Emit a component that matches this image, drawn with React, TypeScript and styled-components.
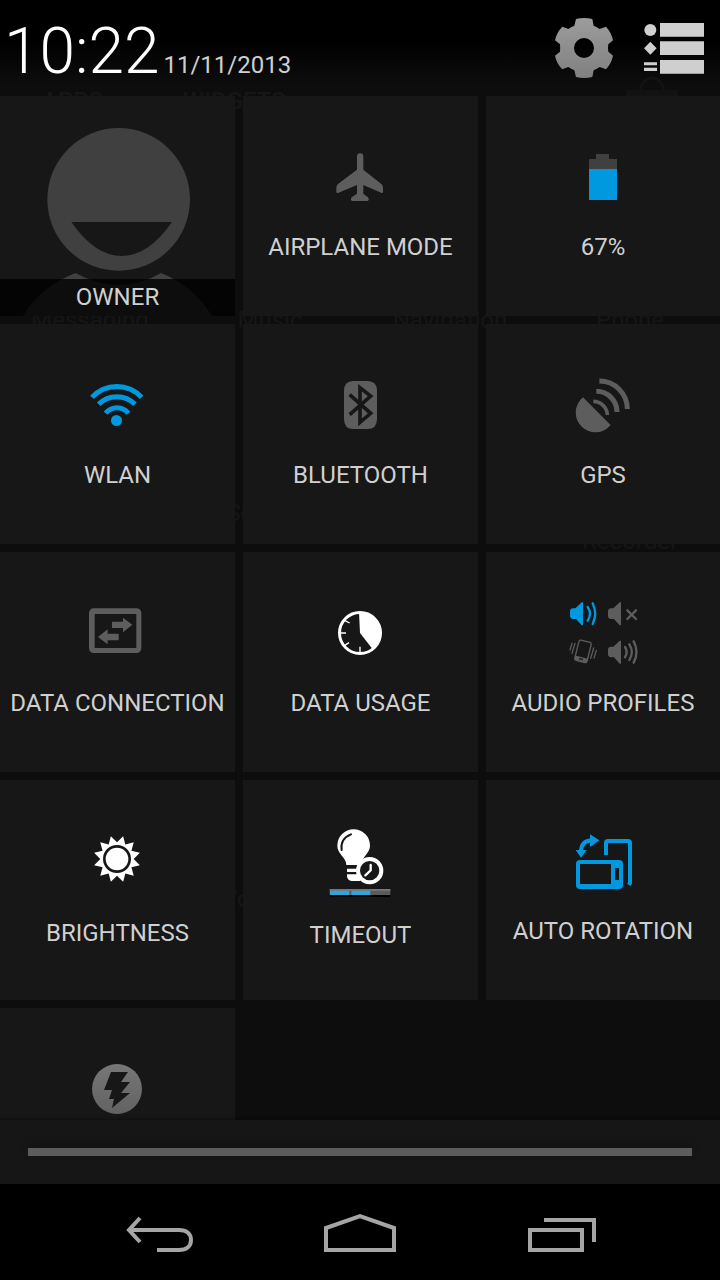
import React from "react";
import styled, { createGlobalStyle } from "styled-components";

const BLUE = "#0099e0";
const GREY = "#5d5d5d";
const TILE = "#171717";
const WHITE = "#ffffff";

const GlobalStyle = createGlobalStyle`
  * { box-sizing: border-box; }
  body { margin: 0; background: #000; font-family: Roboto, "Noto Sans", sans-serif; }
  button { border: 0; padding: 0; margin: 0; background: none; color: inherit; font: inherit; cursor: pointer; }
  svg { display: block; flex: none; }
`;

const Screen = styled.main`
  position: relative;
  display: flex;
  flex-direction: column;
  height: 100vh;
  overflow: hidden;
  background: linear-gradient(#000 0, #000 40px, #0d0d0d 84px, #0d0d0d 100%);
`;

/* Launcher page that shines faintly through the shade */
const Launcher = styled.div`
  position: absolute;
  inset: 0;
  padding-top: 88px;
  color: #161616;
  font-size: 24px;
  line-height: 18px;
`;

const LauncherTabs = styled.div`
  display: flex;
  gap: 80px;
  padding: 4px 42px 0;
  height: 48px;
  font-weight: 500;
`;

const LauncherRow = styled.div`
  display: grid;
  grid-template-columns: repeat(4, 1fr);
  height: 193px;
  padding-top: 175px;
`;

const LauncherName = styled.span`
  display: flex;
  flex-direction: column;
  align-items: center;
  gap: 10px;
`;

const StoreMark = styled.svg`
  margin-left: auto;
  overflow: visible;
`;

const Header = styled.header`
  position: relative;
  display: flex;
  align-items: center;
  justify-content: space-between;
  height: 96px;
  flex: none;
  padding: 0 16px 0 4px;
`;

const Clock = styled.div`
  display: flex;
  align-items: baseline;
  gap: 4px;
  padding-top: 8px;
`;

const Time = styled.time`
  color: #fff;
  font-size: 64px;
  font-weight: 300;
  line-height: 84px;
`;

const DateText = styled.time`
  color: #cfcfcf;
  font-size: 24px;
  line-height: 28px;
`;

const HeaderActions = styled.div`
  display: flex;
  align-items: center;
  gap: 30px;
`;

const Tiles = styled.section`
  position: relative;
  flex: 1;
  min-height: 0;
  overflow: hidden;
  display: grid;
  grid-template-columns: 235fr 235fr 234fr;
  grid-auto-rows: 220px;
  align-content: start;
  gap: 8px;
`;

const Tile = styled.button`
  display: flex;
  flex-direction: column;
  align-items: center;
  gap: 17px;
  padding-top: 40px;
  background: ${TILE};
`;

const Label = styled.span`
  color: #d0d0d0;
  font-size: 24px;
  line-height: 28px;
  white-space: nowrap;
`;

const OwnerTile = styled.button`
  display: grid;
  grid-template: 100% / 100%;
  background: ${TILE};
  overflow: hidden;
  & > * { grid-area: 1 / 1; }
`;

const OwnerBar = styled.span`
  display: flex;
  justify-content: center;
  align-self: end;
  z-index: 1;
  padding: 4px 0 5px;
  background: rgba(0, 0, 0, 0.8);
`;

const HandlePanel = styled.button`
  position: relative;
  display: flex;
  align-items: center;
  flex: none;
  height: 64px;
  padding: 0 28px;
  background: #161616;
  box-shadow: 0 -1px 4px rgba(0, 0, 0, 0.4);
`;

const HandleBar = styled.span`
  flex: 1;
  height: 8px;
  background: #5c5c5c;
  box-shadow: 0 -4px 10px rgba(0, 0, 0, 0.2);
`;

const NavBar = styled.nav`
  position: relative;
  display: flex;
  flex: none;
  height: 96px;
  padding: 0 60px;
  background: #000;
`;

const NavButton = styled.button`
  display: flex;
  flex: 1;
  align-items: center;
  justify-content: center;
`;

const Glyph = ({ x, y, h = 80, children }: { x: number; y: number; h?: number; children: React.ReactNode }) => (
  <svg width="80" height={h} viewBox={`${x} ${y} 240 ${h * 3}`} aria-hidden="true">
    {children}
  </svg>
);

const Airplane = () => (
  <Glyph x={33} y={18}>
    <path
      fill={GREY}
      d="M141 79q0-9 9.500-9t9.500 9V119L213 161q6 5 6 11V186q0 4-4 3L160 165V191L174 202q3 4 2 8l-3 3H126l-3-3q-1-4 2-8L141 191V165L84 189q-5 1-5-3V172q0-6 6-11L141 119Z"
    />
  </Glyph>
);

const Battery = () => (
  <Glyph x={759} y={18}>
    <path fill="#404040" d="M858 72h39v15h24v30h-84V87h21z" />
    <path fill={BLUE} d="M837 117h84v93h-84z" />
  </Glyph>
);

const Wifi = () => (
  <Glyph x={54} y={12}>
    <circle cx="169.500" cy="181.500" r="16.500" fill={BLUE} />
    <g fill="none" stroke={BLUE} strokeWidth="15">
      <path d="M96 112A101 101 0 0 1 245 112" />
      <path d="M116 133A76 76 0 0 1 225 133" />
      <path d="M137 160A43 43 0 0 1 205 160" />
    </g>
  </Glyph>
);

const Bluetooth = () => (
  <Glyph x={783} y={12}>
    <path fill={GREY} d="M880 63h43q28 0 28 30v84q0 30-28 30h-43q-28 0-28-30V93q0-30 28-30z" />
    <path fill="none" stroke={TILE} strokeWidth="11" d="M869 104 932 160 900 187V83L932 108 869 164" />
  </Glyph>
);

const Gps = () => (
  <Glyph x={68} y={12}>
    <path fill={GREY} d="M128 112 211 195A59 59 0 1 1 128 112Z" />
    <g fill="none" stroke={GREY}>
      <path strokeWidth="15" d="M177 63A84 84 0 0 1 261 147" />
      <path strokeWidth="15" d="M168 94A62 62 0 0 1 230 156" />
      <path strokeWidth="11" d="M159 124A42 42 0 0 1 201 165" />
    </g>
  </Glyph>
);

const DataConnection = () => (
  <Glyph x={54} y={6}>
    <g fill={GREY}>
      <path
        fillRule="evenodd"
        d="M101 55H230a14 14 0 0 1 14 14V175a14 14 0 0 1-14 14H101a14 14 0 0 1-14-14V69a14 14 0 0 1 14-14ZM104 72V174H229V72Z"
      />
      <path d="M156 95h33V83l28 21-28 23V114h-33zM176 131h-33V118l-29 23 29 22V151h33z" />
    </g>
  </Glyph>
);

const DataUsage = () => (
  <Glyph x={783} y={6}>
    <circle cx="900" cy="129" r="61.500" fill="none" stroke={WHITE} strokeWidth="9" />
    <path fill={WHITE} d="M900 129 897 66A63 63 0 0 1 938 178Z" />
    <path stroke={WHITE} strokeWidth="4" d="M842 129h16M900 188v-18M853 91l16 8M853 167l14-9" />
  </Glyph>
);

const SPEAKER = "M90 64q0-8 9-9h7L125 37h4V106h-4L108 87h-9q-9-1-9-9z";

const AudioProfiles = () => (
  <Glyph x={69} y={6}>
    <path fill={BLUE} d={SPEAKER} />
    <g fill="none" strokeLinecap="round" strokeWidth="7">
      <path stroke={BLUE} d="M143 51q14 20 0 41M158 40q15 31 0 62" />
      <g stroke={GREY}>
        <path d="M262 61l26 26M288 61l-26 26" />
        <path d="M255 171q10 15 0 31M268 163q15 23 0 47M281 154q17 32 0 64" />
        <path strokeWidth="4" d="M96 160l-6 20M105 160l-9 30M161 174l-9 31M169 181l-7 23" />
      </g>
    </g>
    <path fill={GREY} d={SPEAKER} transform="translate(114 0)" />
    <path fill={GREY} d={SPEAKER} transform="translate(114 115)" />
    <g transform="rotate(14 129 184)">
      <rect x="110" y="153" width="38" height="62" rx="5" fill="none" stroke={GREY} strokeWidth="4" />
      <path fill={GREY} fillRule="evenodd" d="M110 202h38v12h-38zM123 206v4h12v-4z" />
    </g>
  </Glyph>
);

const sunPoints = Array.from({ length: 24 }, (_, i) => {
  const r = i % 2 ? 50 : 71;
  const a = ((i * 15 + 15) * Math.PI) / 180;
  return `${(171 + r * Math.sin(a)).toFixed(1)},${(117 - r * Math.cos(a)).toFixed(1)}`;
}).join(" ");

const Brightness = () => (
  <Glyph x={54} y={0} h={82}>
    <polygon points={sunPoints} fill={WHITE} />
    <circle cx="171" cy="117" r="38" fill={WHITE} stroke={TILE} strokeWidth="8" />
  </Glyph>
);

const Timeout = () => (
  <Glyph x={783} y={0} h={84}>
    <path
      fill={WHITE}
      d="M881 28a49 49 0 0 1 49 49c0 24-27 35-27 58H859c0-24-27-32-27-58a49 49 0 0 1 49-49zM861 146h36v10h-36zM861 163h40v20H875q-13-2-14-14z"
    />
    <path fill="none" stroke={TILE} strokeWidth="6" strokeLinecap="round" d="M845 90Q840 56 873 43" />
    <circle cx="929" cy="152" r="35" fill={TILE} stroke={WHITE} strokeWidth="12" />
    <path fill="none" stroke={WHITE} strokeWidth="7" strokeLinecap="round" d="M932 135V151L916 166" />
    <path fill="#000" d="M811 225h180v6H811z" />
    <path fill="#5b5b5b" d="M809 207h182v18H809z" />
    <path fill="#2da6de" d="M810 211h58v14h-58zM874 211h57v14h-57z" />
    <path fill="#777" d="M809 207h182v5H809z" />
  </Glyph>
);

const AutoRotation = () => (
  <Glyph x={69} y={0}>
    <g fill={BLUE}>
      <path
        fillRule="evenodd"
        d="M120 120H237a12 12 0 0 1 12 12V195a12 12 0 0 1-12 12H120a12 12 0 0 1-12-12V132a12 12 0 0 1 12-12ZM120 132V192H213V132ZM225 144V180h12V144Z"
      />
      <path d="M150 43 178 61 150 81ZM107 90H140L123 113Z" />
    </g>
    <path fill="none" stroke={BLUE} strokeWidth="12" d="M123 94Q124 64 153 61M198 105V69q0-6 6-6h60q6 0 6 6V189l-3 6" />
  </Glyph>
);

const Torch = () => (
  <svg width="80" height="80" viewBox="1 0 80 80" aria-hidden="true">
    <defs>
      <linearGradient id="torch" x1="0" y1="0" x2="0" y2="1">
        <stop offset="0" stopColor="#777" />
        <stop offset="1" stopColor="#626262" />
      </linearGradient>
    </defs>
    <circle cx="40" cy="41" r="25" fill="url(#torch)" />
    <path fill={TILE} d="M34 24H51L44 34H53L44 45H53L35 60 37 51H32L35 42H27Z" />
  </svg>
);

const Avatar = () => (
  <svg width="100%" height="100%" viewBox="0 -42 705 660" preserveAspectRatio="xMidYMax slice" aria-hidden="true">
    <circle cx="356" cy="268" r="214" fill="#404040" />
    <path fill={TILE} d="M214 336H516Q445 438 365 438T214 336Z" />
    <path fill="#404040" d="M69 618Q125 527 227 489Q290 525 356 525T483 489Q580 527 636 618Z" />
  </svg>
);

const tiles: { label: string; icon: React.FC }[] = [
  { label: "AIRPLANE MODE", icon: Airplane },
  { label: "67%", icon: Battery },
  { label: "WLAN", icon: Wifi },
  { label: "BLUETOOTH", icon: Bluetooth },
  { label: "GPS", icon: Gps },
  { label: "DATA CONNECTION", icon: DataConnection },
  { label: "DATA USAGE", icon: DataUsage },
  { label: "AUDIO PROFILES", icon: AudioProfiles },
  { label: "BRIGHTNESS", icon: Brightness },
  { label: "TIMEOUT", icon: Timeout },
  { label: "AUTO ROTATION", icon: AutoRotation },
];

/* Each cell lists the lines of one app name */
const launcherRows: string[][][] = [
  [["Messaging"], ["Music"], ["Navigation"], ["Phone"]],
  [[], ["Settings"], [], ["\u00a0", "Recorder"]],
  [[], [], [], []],
  [[], ["YouTube"], [], []],
];

const NavIcon = ({ x, d }: { x: number; d: string }) => (
  <svg width="80" height="48" viewBox={`${x} 1208 80 48`} aria-hidden="true">
    <path d={d} fill="none" stroke="#a5a5a5" strokeWidth="4" />
  </svg>
);

export default function App() {
  return (
    <>
      <GlobalStyle />
      <Screen>
        <Launcher aria-hidden="true">
          <LauncherTabs>
            <span>APPS</span>
            <span>WIDGETS</span>
            <StoreMark width="52" height="28" viewBox="0 4 52 28">
              <path fill="#121212" d="M0 2h52v26H0z" />
              <path fill="none" stroke="#121212" strokeWidth="3" d="M14 4Q16-10 26-10T38 4" />
            </StoreMark>
          </LauncherTabs>
          {launcherRows.map((row, r) => (
            <LauncherRow key={r}>
              {row.map((lines, c) => (
                <LauncherName key={c}>
                  {lines.map((line) => (
                    <span key={line}>{line}</span>
                  ))}
                </LauncherName>
              ))}
            </LauncherRow>
          ))}
        </Launcher>

        <Header>
          <Clock>
            <Time>10:22</Time>
            <DateText dateTime="2013-11-11">11/11/2013</DateText>
          </Clock>
          <HeaderActions>
            <button aria-label="Settings">
              <svg width="60" height="62" viewBox="162 51 180 186" aria-hidden="true">
                <defs>
                  <linearGradient id="gear" x1="0" y1="0" x2="0" y2="1">
                    <stop offset="0" stopColor="#9c9c9c" />
                    <stop offset="1" stopColor="#808080" />
                  </linearGradient>
                </defs>
                <path
                  fill="url(#gear)"
                  fillRule="evenodd"
                  d="M228 57Q252 51 277 57L281 77Q291 81 299 87L318 80Q334 97 339 121L325 133Q323 144 325 155L339 167Q334 191 318 208L299 201Q291 207 281 211L277 231Q252 237 228 231L223 211Q213 207 205 201L187 208Q170 191 165 167L180 155Q181 144 180 133L165 121Q170 97 187 80L205 87Q213 81 223 77ZM252 114a30 30 0 1 0 0 60a30 30 0 1 0 0-60Z"
                />
              </svg>
            </button>
            <button aria-label="Notifications">
              <svg width="60" height="52" viewBox="432 66 180 156" aria-hidden="true">
                <g fill="#cfcfcf">
                  <path d="M480 69h132v41H480zM480 124h132v41H480zM480 180h132v41H480zM432 187h39v9h-39zM432 203h39v10h-39zM451 125l19 20-19 19-19-19z" />
                  <circle cx="451" cy="90" r="18" />
                </g>
              </svg>
            </button>
          </HeaderActions>
        </Header>

        <Tiles>
          <OwnerTile>
            <Avatar />
            <OwnerBar>
              <Label>OWNER</Label>
            </OwnerBar>
          </OwnerTile>
          {tiles.map(({ label, icon: Icon }) => (
            <Tile key={label}>
              <Icon />
              <Label>{label}</Label>
            </Tile>
          ))}
          <Tile aria-label="Torch">
            <Torch />
          </Tile>
        </Tiles>

        <HandlePanel aria-label="Close panel">
          <HandleBar />
        </HandlePanel>

        <NavBar>
          <NavButton aria-label="Back">
            <NavIcon x={120} d="M140 1218 129 1230 140 1242M130 1230H179C187 1230 191 1234 191 1240S187 1250 179 1250H157" />
          </NavButton>
          <NavButton aria-label="Home">
            <NavIcon x={320} d="M326 1250V1228L360 1216 394 1228V1250Z" />
          </NavButton>
          <NavButton aria-label="Recent apps">
            <NavIcon x={520} d="M530 1230H582V1250H530ZM544 1220H594V1242" />
          </NavButton>
        </NavBar>
      </Screen>
    </>
  );
}
